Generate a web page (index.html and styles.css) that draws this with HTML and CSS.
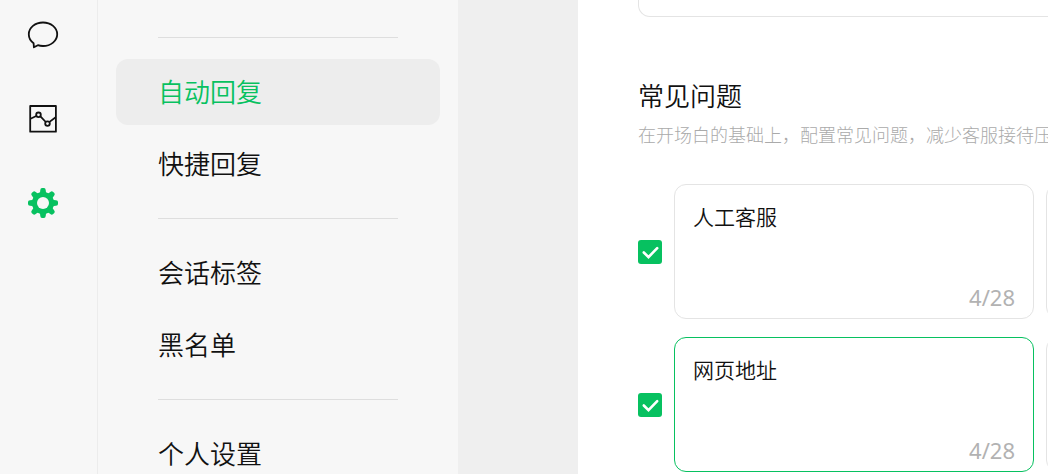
FILE: index.html
```
<!DOCTYPE html>
<html lang="zh-CN">
<head>
    <meta charset="UTF-8">
    <meta name="viewport" content="width=device-width, initial-scale=1.0">
    <title>自动回复</title>
    <link rel="stylesheet" href="styles.css">
</head>
<body>
    <div class="rail">
        <a class="rail-link" href="#chat" aria-label="会话">
            <svg class="icon" viewBox="0 0 32 32" fill="none" stroke="currentColor" stroke-width="1.8" stroke-linejoin="round">
                <path d="M6.600 24.200C3.500 21.900 1.800 18.800 1.800 15.200 1.800 8.600 8.100 3.500 16 3.500s14.200 5.100 14.200 11.700S23.900 27 16 27c-1.800 0-3.500-.2-5.100-.8L6.900 28.300z"/>
            </svg>
        </a>
        <a class="rail-link" href="#stats" aria-label="数据">
            <svg class="icon" viewBox="0 0 32 32" fill="none" stroke="currentColor" stroke-width="1.8" stroke-linejoin="round">
                <rect x="3.200" y="3" width="25.700" height="25.700"/>
                <path d="M3.500 15.700L9.300 13M13.400 13.300L18.800 19M22.500 18.900L28.700 14.300"/>
                <circle cx="11.500" cy="11.800" r="2.300"/>
                <circle cx="20.500" cy="20.600" r="2.300"/>
            </svg>
        </a>
        <a class="rail-link rail-link-active" href="#settings" aria-label="设置">
            <svg class="icon" viewBox="0 0 32 32">
                <g fill="currentColor">
                    <circle cx="16" cy="16" r="11"/>
                    <path id="tooth" d="M12.300 6.500Q13.300 5.500 13.300 3Q13.500 1 15 1h2q1.500 0 1.700 2Q18.700 5.500 19.700 6.500v19Q18.700 26.500 18.700 29Q18.500 31 17 31h-2q-1.500 0-1.700-2Q13.300 26.500 12.300 25.500z"/>
                    <use href="#tooth" transform="rotate(45 16 16)"/>
                    <use href="#tooth" transform="rotate(90 16 16)"/>
                    <use href="#tooth" transform="rotate(135 16 16)"/>
                </g>
                <circle cx="16" cy="16" r="6" fill="#f7f7f7"/>
            </svg>
        </a>
    </div>

    <nav class="menu">
        <hr class="menu-line">
        <a class="menu-item menu-item-active" href="#auto">自动回复</a>
        <a class="menu-item" href="#quick">快捷回复</a>
        <hr class="menu-line">
        <a class="menu-item" href="#tags">会话标签</a>
        <a class="menu-item" href="#blacklist">黑名单</a>
        <hr class="menu-line">
        <a class="menu-item" href="#profile">个人设置</a>
    </nav>

    <main class="content">
        <textarea class="greeting" aria-label="开场白"></textarea>

        <h2 class="title">常见问题</h2>
        <p class="hint">在开场白的基础上，配置常见问题，减少客服接待压</p>

        <div class="questions">
            <div class="question">
                <input class="check" type="checkbox" aria-label="启用人工客服" checked>
                <div class="box">
                    <textarea class="box-text" aria-label="问题" maxlength="28">人工客服</textarea>
                    <span class="count">4/28</span>
                </div>
                <div class="box box-answer">
                    <textarea class="box-text" aria-label="回复"></textarea>
                </div>
            </div>
            <div class="question">
                <input class="check" type="checkbox" aria-label="启用网页地址" checked>
                <div class="box box-current">
                    <textarea class="box-text" aria-label="问题" maxlength="28">网页地址</textarea>
                    <span class="count">4/28</span>
                </div>
                <div class="box box-answer">
                    <textarea class="box-text" aria-label="回复"></textarea>
                </div>
            </div>
        </div>
    </main>
</body>
</html>
```
FILE: styles.css
```
* {
    box-sizing: border-box;
}

body {
    margin: 0;
    height: 100vh;
    display: flex;
    overflow: hidden;
    background-color: #efefef;
    color: #111;
    font-family: "Noto Sans", "Noto Sans CJK SC", sans-serif;
    font-weight: 350;
}

/* left icon rail */
.rail {
    flex: none;
    width: 98px;
    padding: 19px 27px;
    display: flex;
    flex-direction: column;
    gap: 52px;
    background-color: #f7f7f7;
    border-right: 1px solid #ececec;
}

.rail-link {
    display: block;
    height: 32px;
    color: #111;
}

.rail-link-active {
    color: #07c160;
}

.icon {
    display: block;
    width: 32px;
    height: 32px;
}

/* settings menu */
.menu {
    flex: none;
    width: 360px;
    padding: 16px 18px;
    display: flex;
    flex-direction: column;
    background-color: #f7f7f7;
}

.menu-line {
    flex: none;
    width: 240px;
    height: 1px;
    margin: 21px 42px;
    border: none;
    background-color: #dedede;
}

.menu-item {
    flex: none;
    padding: 0 42px;
    border-radius: 12px;
    font-size: 26px;
    line-height: 66px;
    color: #111;
    text-decoration: none;
}

.menu-item + .menu-item {
    margin-top: 6px;
}

.menu-item-active {
    background-color: #ededed;
    color: #07c160;
}

/* page content */
.content {
    flex: 1;
    min-width: 0;
    margin-left: 120px;
    padding-left: 60px;
    overflow: hidden;
    background-color: #fff;
}

.greeting {
    display: block;
    width: 840px;
    height: 17px;
    padding: 0;
    border: 1px solid #e4e4e4;
    border-top: none;
    border-radius: 0 0 12px 12px;
    resize: none;
    outline: none;
}

.title {
    margin: 60px 0 0;
    font-size: 26px;
    font-weight: inherit;
    line-height: 38px;
}

.hint {
    margin: 6px 0 0;
    font-size: 18px;
    font-weight: 300;
    line-height: 28px;
    color: #aaa;
    white-space: nowrap;
}

.questions {
    margin-top: 35px;
    display: flex;
    flex-direction: column;
    gap: 18px;
}

.question {
    display: flex;
    align-items: center;
    gap: 12px;
}

.check {
    flex: none;
    appearance: none;
    width: 24px;
    height: 24px;
    margin: 0;
    border: 1px solid #d0d0d0;
    border-radius: 3px;
}

.check:checked {
    border: none;
    background: #07c160 url("data:image/svg+xml,%3Csvg xmlns='http://www.w3.org/2000/svg' viewBox='0 0 24 24'%3E%3Cpath d='M5.800 12.500l4.700 4.600 8.700-8.900' fill='none' stroke='white' stroke-width='2.600' stroke-linecap='round'/%3E%3C/svg%3E");
}

.box {
    flex: none;
    width: 360px;
    height: 135px;
    padding: 16px 18px 6px;
    display: flex;
    flex-direction: column;
    border: 1px solid #e4e4e4;
    border-radius: 12px;
}

.box-answer {
    width: 480px;
}

.box-current {
    border-color: #07c160;
}

.box-text {
    flex: 1;
    width: 100%;
    min-height: 0;
    padding: 0;
    border: none;
    outline: none;
    resize: none;
    background: none;
    color: #111;
    font-family: inherit;
    font-size: 21px;
    font-weight: inherit;
    line-height: 32px;
}

.count {
    align-self: flex-end;
    font-size: 22px;
    font-weight: 400;
    line-height: 30px;
    color: #b2b2b2;
}
```
